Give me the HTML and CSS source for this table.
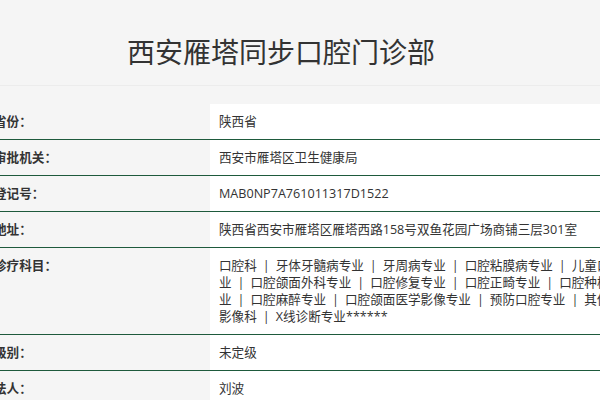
FILE: index.html
```html
<!DOCTYPE html>
<html lang="zh-CN">
<head>
<meta charset="utf-8">
<title>西安雁塔同步口腔门诊部</title>
<link rel="stylesheet" href="styles.css">
</head>
<body>
<div class="header"><h1 class="title">西安雁塔同步口腔门诊部</h1></div>
<div class="info">
  <div class="row"><div class="label">省份：</div><div class="value">陕西省</div></div>
  <div class="row"><div class="label">审批机关：</div><div class="value">西安市雁塔区卫生健康局</div></div>
  <div class="row"><div class="label">登记号：</div><div class="value">MAB0NP7A761011317D1522</div></div>
  <div class="row"><div class="label">地址：</div><div class="value">陕西省西安市雁塔区雁塔西路158号双鱼花园广场商铺三层301室</div></div>
  <div class="row"><div class="label">诊疗科目：</div><div class="value">口腔科<span class="sep">|</span>牙体牙髓病专业<span class="sep">|</span>牙周病专业<span class="sep">|</span>口腔粘膜病专业<span class="sep">|</span>儿童口腔专业<span class="sep">|</span>口腔颌面外科专业<span class="sep">|</span>口腔修复专业<span class="sep">|</span>口腔正畸专业<span class="sep">|</span>口腔种植科专业<span class="sep">|</span>口腔麻醉专业<span class="sep">|</span>口腔颌面医学影像专业<span class="sep">|</span>预防口腔专业<span class="sep">|</span>其他<span class="sep">|</span>医学影像科<span class="sep">|</span>X线诊断专业******</div></div>
  <div class="row"><div class="label">级别：</div><div class="value">未定级</div></div>
  <div class="row"><div class="label">法人：</div><div class="value">刘波</div></div>
  <div class="row"><div class="label">床位数：</div><div class="value">0</div></div>
</div>
</body>
</html>
```

FILE: styles.css
```css
html, body {
  margin: 0;
  padding: 0;
}
body {
  background: #f5f5f5;
  color: #333;
  font-family: "Open Sans", "Noto Sans CJK SC", sans-serif;
  overflow: hidden;
  width: 600px;
}
.header {
  height: 85px;
  border-bottom: 1px solid #ececec;
  padding-right: 38px;
  text-align: center;
}
.title {
  margin: 0;
  padding-top: 34px;
  font-size: 28px;
  font-weight: normal;
  line-height: 36px;
  color: #333;
}
.info {
  margin-top: 18px;
  margin-left: -16px;
  width: 684px;
}
.row {
  display: grid;
  grid-template-columns: 226px 1fr;
  border-bottom: 1px solid #1e5a3c;
  font-size: 12.6px;
  line-height: 17px;
}
.label {
  padding: 9px 0 9px 10px;
  font-weight: bold;
  color: #333;
}
.value {
  background: #fff;
  padding: 9px 10px 9px 9px;
  color: #333;
}
.sep {
  margin: 0 6px;
}
```
